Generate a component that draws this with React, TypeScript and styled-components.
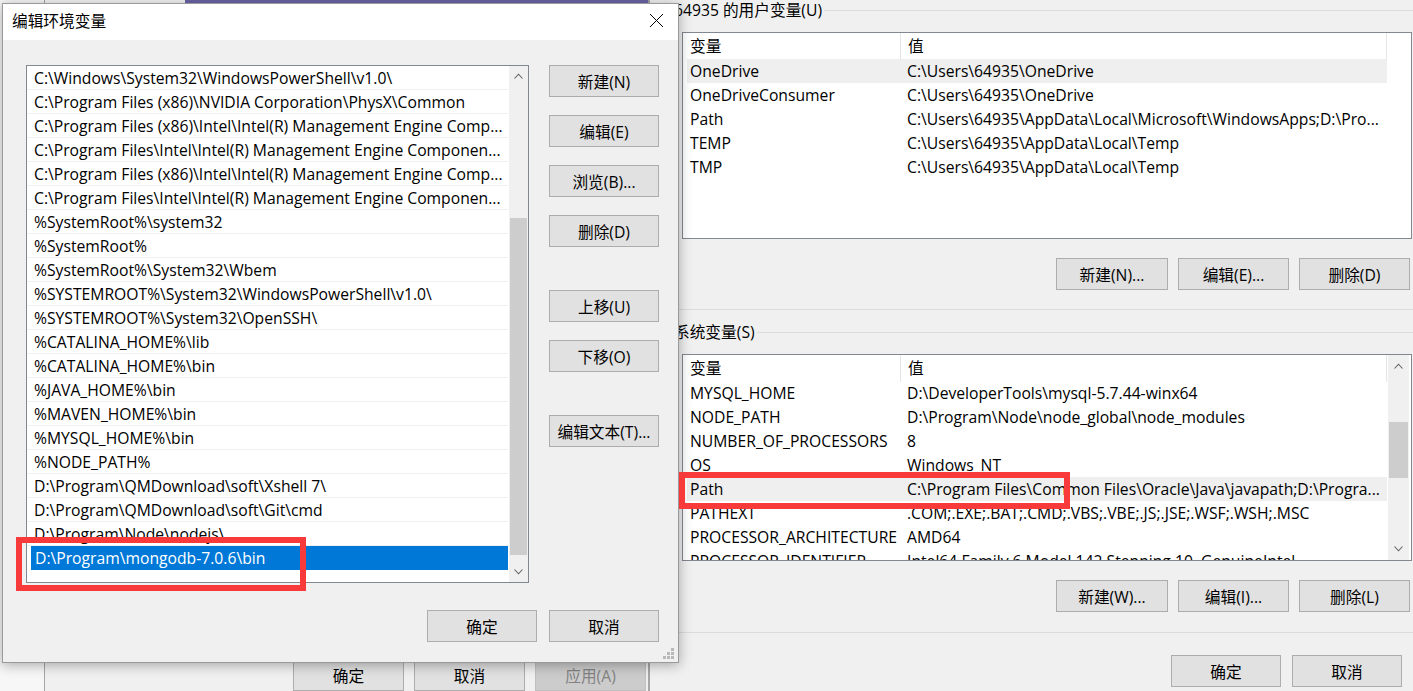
import React from 'react';
import styled, { createGlobalStyle } from 'styled-components';

const GlobalStyle = createGlobalStyle`
  html, body {
    margin: 0;
    padding: 0;
    background: #f7f7f7;
  }
  body {
    font-family: "Open Sans", "Noto Sans CJK SC", sans-serif;
    font-size: 15.7px;
    color: #000;
  }
  * {
    box-sizing: border-box;
  }
`;

const Desktop = styled.div`
  position: relative;
  width: 1413px;
  height: 691px;
  overflow: hidden;
  background: #f7f7f7;
`;

// windows stacked on the desktop
const SysWindow = styled.div`
  position: absolute;
  left: 44px;
  top: -30px;
  width: 605px;
  height: 760px;
  display: flex;
  flex-direction: column;
  background: #f0f0f0;
  border: 1px solid #a6a6a6;
`;

const SysTitle = styled.div`
  height: 33px;
  background: linear-gradient(to right, #f4f4f4 140px, #6b64a6 140px);
`;

const EnvWindow = styled.div`
  position: absolute;
  left: 649px;
  top: 0;
  width: 800px;
  height: 720px;
  padding-left: 13px;
  background: #f0f0f0;
  border-left: 1px solid #a6a6a6;
`;

const EditWindow = styled.div`
  position: absolute;
  left: 2px;
  top: 3px;
  width: 677px;
  height: 660px;
  display: flex;
  flex-direction: column;
  background: #f0f0f0;
  border: 1px solid #9a9a9a;
  box-shadow: 0 2px 12px rgba(0, 0, 0, 0.32);
`;

const TitleBar = styled.div`
  height: 36px;
  flex: none;
  display: flex;
  align-items: center;
  justify-content: space-between;
  padding: 0 14px 3px 9px;
  background: #fff;
`;

const Spacer = styled.div`
  flex: 1;
`;

const Button = styled.button<{ $w?: number }>`
  width: ${({ $w }) => $w ?? 111}px;
  height: 32px;
  padding: 0;
  flex: none;
  font: inherit;
  color: #000;
  background: #e1e1e1;
  border: 1px solid #adadad;

  &:disabled {
    color: #838383;
    background: #cccccc;
    border-color: #bfbfbf;
  }
`;

const ButtonRow = styled.div<{ $gap: number; $mt?: number; $pr?: number; $pb?: number; $w?: number }>`
  display: flex;
  justify-content: flex-end;
  gap: ${({ $gap }) => $gap}px;
  width: ${({ $w }) => ($w ? `${$w}px` : 'auto')};
  margin-top: ${({ $mt }) => $mt ?? 0}px;
  padding-right: ${({ $pr }) => $pr ?? 0}px;
  padding-bottom: ${({ $pb }) => $pb ?? 0}px;
`;

// group boxes in the environment variables window
const Group = styled.fieldset<{ $mt: number; $pb: number }>`
  width: 763px;
  min-width: 0;
  margin: ${({ $mt }) => $mt}px 0 0 0;
  padding: 12px 14px ${({ $pb }) => $pb}px 18px;
  border: 1px solid #dcdcdc;
`;

const Legend = styled.legend`
  margin-left: -10px;
  padding: 0 2px;
  line-height: 20px;
`;

const ListView = styled.div`
  width: 730px;
  height: 207px;
  display: flex;
  overflow: hidden;
  background: #fff;
  border: 1px solid #828790;
`;

const Table = styled.div`
  width: 704px;
  flex: none;
`;

const HeaderRow = styled.div`
  display: grid;
  grid-template-columns: 218px 486px;
  height: 26px;
`;

const HeaderCell = styled.div`
  padding-left: 7px;
  line-height: 27px;
  border-right: 1px solid #e5e5e5;
`;

const Rows = styled.div`
  padding-left: 4px;
`;

const Row = styled.div<{ $active?: boolean }>`
  display: grid;
  grid-template-columns: 214px 1fr;
  height: 24px;
  line-height: 25px;
  white-space: nowrap;
  background: ${({ $active }) => ($active ? '#efefef' : 'transparent')};
`;

const Cell = styled.div<{ $pl: number }>`
  padding-left: ${({ $pl }) => $pl}px;
  overflow: hidden;
`;

const ScrollBar = styled.div<{ $w: number; $ml?: number }>`
  width: ${({ $w }) => $w}px;
  margin-left: ${({ $ml }) => $ml ?? 0}px;
  flex: none;
  display: flex;
  flex-direction: column;
  background: #f0f0f0;
`;

const ScrollArrow = styled.div<{ $h: number }>`
  height: ${({ $h }) => $h}px;
  flex: none;
  display: flex;
  align-items: center;
  justify-content: center;
`;

const Track = styled.div`
  flex: 1;
  padding: 0 1px;
`;

const Thumb = styled.div<{ $top: number; $h: number }>`
  margin-top: ${({ $top }) => $top}px;
  height: ${({ $h }) => $h}px;
  background: #cdcdcd;
`;

// edit dialog body
const EditBody = styled.div`
  flex: 1;
  display: grid;
  grid-template-columns: 503px 110px;
  column-gap: 20px;
  align-items: start;
  padding: 25px 19px 0 23px;
`;

const EditList = styled.div`
  height: 518px;
  display: flex;
  overflow: hidden;
  background: #fff;
  border: 1px solid #828790;
`;

const EditRows = styled.div`
  flex: 1;
  min-width: 0;
`;

const EditRow = styled.div<{ $selected?: boolean }>`
  height: 24px;
  line-height: 25px;
  white-space: nowrap;
  overflow: hidden;
  padding-left: ${({ $selected }) => ($selected ? 4 : 7)}px;
  margin-left: ${({ $selected }) => ($selected ? 4 : 0)}px;
  color: ${({ $selected }) => ($selected ? '#fff' : '#000')};
  background: ${({ $selected }) => ($selected ? '#0078d7' : 'transparent')};
  border-bottom: 1px solid ${({ $selected }) => ($selected ? '#0078d7' : '#f0f0f0')};
`;

const SideButtons = styled.div`
  display: flex;
  flex-direction: column;
`;

const SideButton = styled(Button)<{ $mt: number }>`
  margin-top: ${({ $mt }) => $mt}px;
`;

const Grip = styled.svg`
  position: absolute;
  right: 3px;
  bottom: 2px;
`;

const Mark = styled.div<{ $x: number; $y: number; $w: number; $h: number }>`
  position: absolute;
  left: ${({ $x }) => $x}px;
  top: ${({ $y }) => $y}px;
  width: ${({ $w }) => $w}px;
  height: ${({ $h }) => $h}px;
  border: 6px solid #f93a3a;
  pointer-events: none;
`;

const Chevron = ({ up }: { up?: boolean }) => (
  <svg width="9" height="6" viewBox="0 0 9 6">
    <polyline
      points={up ? '0.5,5.5 4.5,1.2 8.5,5.5' : '0.5,0.5 4.5,4.8 8.5,0.5'}
      fill="none"
      stroke="#606060"
      strokeWidth="1.1"
    />
  </svg>
);

const CloseIcon = () => (
  <svg width="15" height="15" viewBox="0 0 15 15">
    <path d="M1 1 L14 14 M14 1 L1 14" stroke="#000" strokeWidth="1" fill="none" />
  </svg>
);

const pathEntries = [
  'C:\\Windows\\System32\\WindowsPowerShell\\v1.0\\',
  'C:\\Program Files (x86)\\NVIDIA Corporation\\PhysX\\Common',
  'C:\\Program Files (x86)\\Intel\\Intel(R) Management Engine Comp...',
  'C:\\Program Files\\Intel\\Intel(R) Management Engine Componen...',
  'C:\\Program Files (x86)\\Intel\\Intel(R) Management Engine Comp...',
  'C:\\Program Files\\Intel\\Intel(R) Management Engine Componen...',
  '%SystemRoot%\\system32',
  '%SystemRoot%',
  '%SystemRoot%\\System32\\Wbem',
  '%SYSTEMROOT%\\System32\\WindowsPowerShell\\v1.0\\',
  '%SYSTEMROOT%\\System32\\OpenSSH\\',
  '%CATALINA_HOME%\\lib',
  '%CATALINA_HOME%\\bin',
  '%JAVA_HOME%\\bin',
  '%MAVEN_HOME%\\bin',
  '%MYSQL_HOME%\\bin',
  '%NODE_PATH%',
  'D:\\Program\\QMDownload\\soft\\Xshell 7\\',
  'D:\\Program\\QMDownload\\soft\\Git\\cmd',
  'D:\\Program\\Node\\nodejs\\',
  'D:\\Program\\mongodb-7.0.6\\bin',
];

const userVars = [
  ['OneDrive', 'C:\\Users\\64935\\OneDrive'],
  ['OneDriveConsumer', 'C:\\Users\\64935\\OneDrive'],
  ['Path', 'C:\\Users\\64935\\AppData\\Local\\Microsoft\\WindowsApps;D:\\Pro...'],
  ['TEMP', 'C:\\Users\\64935\\AppData\\Local\\Temp'],
  ['TMP', 'C:\\Users\\64935\\AppData\\Local\\Temp'],
];

const systemVars = [
  ['MYSQL_HOME', 'D:\\DeveloperTools\\mysql-5.7.44-winx64'],
  ['NODE_PATH', 'D:\\Program\\Node\\node_global\\node_modules'],
  ['NUMBER_OF_PROCESSORS', '8'],
  ['OS', 'Windows_NT'],
  ['Path', 'C:\\Program Files\\Common Files\\Oracle\\Java\\javapath;D:\\Progra...'],
  ['PATHEXT', '.COM;.EXE;.BAT;.CMD;.VBS;.VBE;.JS;.JSE;.WSF;.WSH;.MSC'],
  ['PROCESSOR_ARCHITECTURE', 'AMD64'],
  ['PROCESSOR_IDENTIFIER', 'Intel64 Family 6 Model 142 Stepping 10, GenuineIntel'],
];

const VarTable = ({ rows, active }: { rows: string[][]; active: number }) => (
  <Table>
    <HeaderRow>
      <HeaderCell>变量</HeaderCell>
      <HeaderCell>值</HeaderCell>
    </HeaderRow>
    <Rows>
      {rows.map(([name, value], i) => (
        <Row key={name} $active={i === active}>
          <Cell $pl={3}>{name}</Cell>
          <Cell $pl={6}>{value}</Cell>
        </Row>
      ))}
    </Rows>
  </Table>
);

const App: React.FC = () => {
  return (
    <>
      <GlobalStyle />
      <Desktop>
        <SysWindow>
          <SysTitle />
          <Spacer />
          <ButtonRow $gap={10} $pr={2} $pb={38}>
            <Button>确定</Button>
            <Button>取消</Button>
            <Button disabled>应用(A)</Button>
          </ButtonRow>
        </SysWindow>

        <EnvWindow>
          <Group $mt={0} $pb={19}>
            <Legend>64935 的用户变量(U)</Legend>
            <ListView>
              <VarTable rows={userVars} active={0} />
            </ListView>
            <ButtonRow $gap={10} $mt={19} $pr={2} $w={730}>
              <Button $w={112}>新建(N)...</Button>
              <Button>编辑(E)...</Button>
              <Button>删除(D)</Button>
            </ButtonRow>
          </Group>

          <Group $mt={12} $pb={20}>
            <Legend>系统变量(S)</Legend>
            <ListView>
              <VarTable rows={systemVars} active={4} />
              <ScrollBar $w={21} $ml={1}>
                <ScrollArrow $h={21}>
                  <Chevron up />
                </ScrollArrow>
                <Track>
                  <Thumb $top={46} $h={56} />
                </Track>
                <ScrollArrow $h={22}>
                  <Chevron />
                </ScrollArrow>
              </ScrollBar>
            </ListView>
            <ButtonRow $gap={10} $mt={19} $pr={2} $w={730}>
              <Button $w={112}>新建(W)...</Button>
              <Button>编辑(I)...</Button>
              <Button>删除(L)</Button>
            </ButtonRow>
          </Group>

          <ButtonRow $gap={11} $mt={22} $pr={24} $w={763}>
            <Button $w={110}>确定</Button>
            <Button $w={110}>取消</Button>
          </ButtonRow>
        </EnvWindow>

        <EditWindow>
          <TitleBar>
            <span>编辑环境变量</span>
            <CloseIcon />
          </TitleBar>
          <EditBody>
            <EditList>
              <EditRows>
                {pathEntries.map((p, i) => (
                  <EditRow key={p + i} $selected={i === pathEntries.length - 1}>
                    {p}
                  </EditRow>
                ))}
              </EditRows>
              <ScrollBar $w={19} $ml={1}>
                <ScrollArrow $h={19}>
                  <Chevron up />
                </ScrollArrow>
                <Track>
                  <Thumb $top={133} $h={337} />
                </Track>
                <ScrollArrow $h={20}>
                  <Chevron />
                </ScrollArrow>
              </ScrollBar>
            </EditList>
            <SideButtons>
              <SideButton $w={110} $mt={0}>新建(N)</SideButton>
              <SideButton $w={110} $mt={18}>编辑(E)</SideButton>
              <SideButton $w={110} $mt={18}>浏览(B)...</SideButton>
              <SideButton $w={110} $mt={18}>删除(D)</SideButton>
              <SideButton $w={110} $mt={43}>上移(U)</SideButton>
              <SideButton $w={110} $mt={18}>下移(O)</SideButton>
              <SideButton $w={110} $mt={43}>编辑文本(T)...</SideButton>
            </SideButtons>
          </EditBody>
          <ButtonRow $gap={12} $pr={19} $pb={20}>
            <Button $w={110}>确定</Button>
            <Button $w={110}>取消</Button>
          </ButtonRow>
          <Grip width="12" height="12" viewBox="0 0 12 12">
            {[
              [8, 0],
              [4, 4],
              [8, 4],
              [0, 8],
              [4, 8],
              [8, 8],
            ].map(([x, y]) => (
              <rect key={`${x}-${y}`} x={x} y={y} width="3" height="3" fill="#b9b9b9" />
            ))}
          </Grip>
        </EditWindow>

        <Mark $x={16} $y={537} $w={290} $h={54} />
        <Mark $x={679} $y={472} $w={391} $h={37} />
      </Desktop>
    </>
  );
};

export default App;
